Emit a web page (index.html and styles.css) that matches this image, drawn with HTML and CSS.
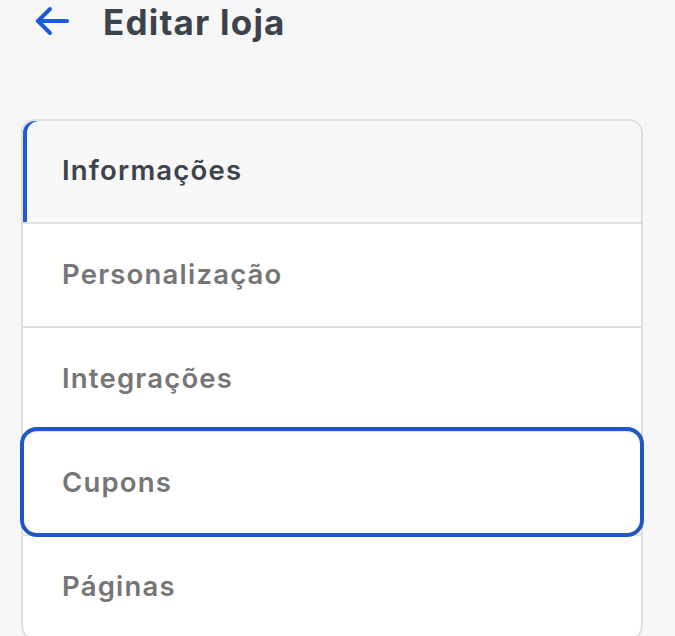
FILE: index.html
```html
<!DOCTYPE html>
<html lang="pt-BR">
<head>
<meta charset="utf-8">
<title>Editar loja</title>
<link rel="stylesheet" href="styles.css">
</head>
<body>
<div class="page">
  <header class="header">
    <a class="back" href="#" aria-label="Voltar">
      <svg width="36" height="32" viewBox="0 0 36 32" fill="none" stroke="#1b5cd6" stroke-width="4" stroke-linecap="round" stroke-linejoin="round">
        <path d="M3 15H32"/>
        <path d="M15 3L3 15L15 27"/>
      </svg>
    </a>
    <h1 class="title">Editar loja</h1>
  </header>
  <nav class="card">
    <div class="item active">Informações</div>
    <div class="item">Personalização</div>
    <div class="item">Integrações</div>
    <div class="item focused">Cupons</div>
    <div class="item">Páginas</div>
  </nav>
</div>
</body>
</html>
```
FILE: styles.css
```css
html, body {
  margin: 0;
  background: #f7f7f7;
}
body {
  font-family: "Inter", "Open Sans", "DejaVu Sans", sans-serif;
}
.page {
  padding: 0 32px 0 21px;
}
.header {
  display: flex;
  align-items: center;
  height: 44px;
  gap: 32px;
  padding-left: 14px;
}
.back {
  display: flex;
}
.title {
  margin: 0;
  font-size: 35px;
  font-weight: 700;
  letter-spacing: 1.2px;
  color: #3d434b;
  line-height: 44px;
}
.card {
  margin-top: 75px;
  width: 618px;
  border: 2px solid #dfdfdf;
  border-radius: 14px;
  background: #fff;
}
.item {
  box-sizing: border-box;
  height: 104px;
  padding: 0 0 3px 39px;
  border-top: 2px solid #e0e0e0;
  display: flex;
  align-items: center;
  font-size: 27.5px;
  font-weight: 600;
  letter-spacing: 1.2px;
  color: #767676;
}
.item.active {
  height: 101px;
  border-top: 0;
  background: #f8f8f8;
  color: #3d434b;
  border-radius: 12px 12px 0 0;
  box-shadow: inset 4px 0 0 #1f5bd1;
}
.item.focused {
  position: relative;
  border-radius: 14px;
  outline: 4px solid #2157c4;
  outline-offset: -1px;
}
```
